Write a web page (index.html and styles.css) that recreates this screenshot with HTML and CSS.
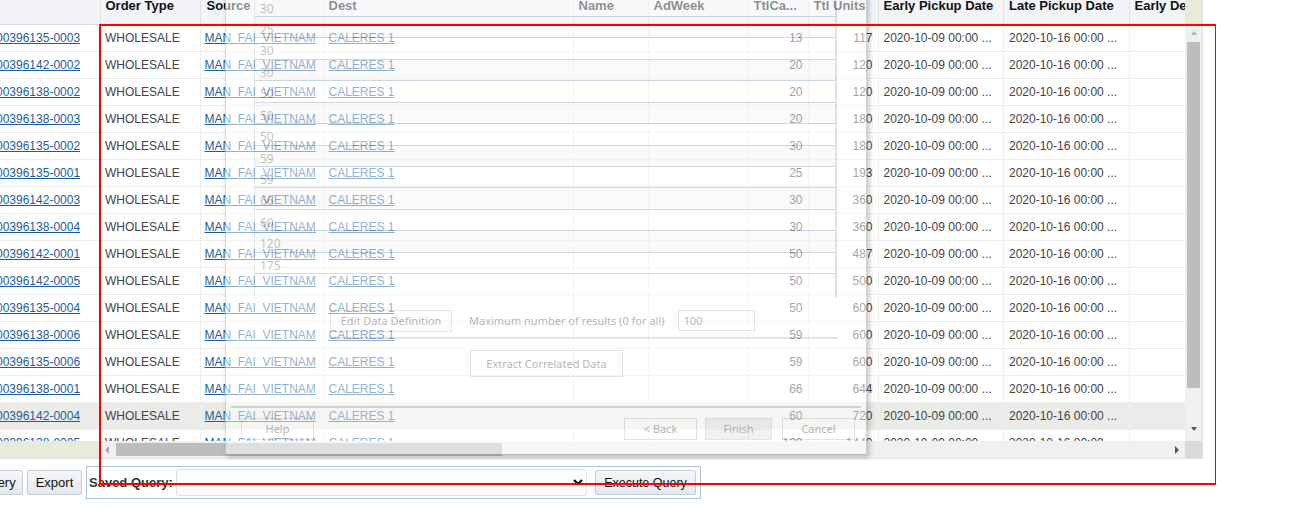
FILE: index.html
```html
<!DOCTYPE html>
<html lang="en">
<head>
  <meta charset="UTF-8" />
  <title>Order Query</title>
  <link rel="stylesheet" href="styles.css">
</head>
<body>
  <div class="panel">
    <div class="panel-top">
      <div class="table-wrap">
        <table class="orders">
          <colgroup>
            <col class="c-id"><col class="c-type"><col class="c-source"><col class="c-dest"><col class="c-name"><col class="c-week"><col class="c-cartons"><col class="c-units"><col class="c-date"><col class="c-date"><col class="c-rest">
          </colgroup>
          <thead>
            <tr><th></th><th>Order Type</th><th class="source-head">Source</th><th>Dest</th><th>Name</th><th>AdWeek</th><th>TtlCa...</th><th>Ttl Units</th><th>Early Pickup Date</th><th>Late Pickup Date</th><th>Early Delivery Date</th></tr>
          </thead>
          <tbody id="orderRows"></tbody>
        </table>
      </div>
      <div class="vscroll">
        <div class="corner-beige"></div>
        <div class="vtrack">
          <span class="arrow up"></span>
          <div class="vthumb"></div>
          <span class="arrow down"></span>
        </div>
      </div>
    </div>
    <div class="hscroll">
      <div class="hscroll-blank"></div>
      <div class="htrack">
        <span class="arrow left"></span>
        <div class="hthumb"></div>
        <span class="arrow right"></span>
      </div>
      <div class="corner-grey"></div>
    </div>
  </div>

  <div class="toolbar">
    <button class="tool-btn query-btn">Query</button>
    <button class="tool-btn export-btn">Export</button>
    <div class="saved-box">
      <label class="saved-label" for="savedQuery">Saved Query:</label>
      <select class="saved-select" id="savedQuery"><option></option></select>
      <button class="tool-btn execute-btn">Execute Query</button>
    </div>
  </div>

  <!-- wizard dialog fading out over the grid -->
  <div class="dialog">
    <div class="inner-box">
      <div class="inner-row">30</div>
      <div class="inner-row alt">25</div>
      <div class="inner-row">30</div>
      <div class="inner-row alt">30</div>
      <div class="inner-row">50</div>
      <div class="inner-row alt">50</div>
      <div class="inner-row">50</div>
      <div class="inner-row alt">59</div>
      <div class="inner-row">59</div>
      <div class="inner-row alt">66</div>
      <div class="inner-row">60</div>
      <div class="inner-row alt">120</div>
      <div class="inner-row">175</div>
    </div>
    <div class="def-row">
      <button class="dlg-btn edit-btn">Edit Data Definition</button>
      <span class="max-label">Maximum number of results (0 for all)</span>
      <input class="max-input" type="text" value="100" />
    </div>
    <div class="extract-row">
      <button class="dlg-btn extract-btn">Extract Correlated Data</button>
    </div>
    <div class="dlg-footer">
      <button class="dlg-btn foot-btn">Help</button>
      <span class="footer-gap"></span>
      <button class="dlg-btn foot-btn">&lt; Back</button>
      <button class="dlg-btn finish-btn">Finish</button>
      <button class="dlg-btn foot-btn">Cancel</button>
    </div>
  </div>

  <div class="red-mark"></div>

  <script>
    var rows = [
      ['00396135-0003', 13, 117], ['00396142-0002', 20, 120], ['00396138-0002', 20, 120],
      ['00396138-0003', 20, 180], ['00396135-0002', 30, 180], ['00396135-0001', 25, 193],
      ['00396142-0003', 30, 360], ['00396138-0004', 30, 360], ['00396142-0001', 50, 487],
      ['00396142-0005', 50, 500], ['00396135-0004', 50, 600], ['00396138-0006', 59, 600],
      ['00396135-0006', 59, 600], ['00396138-0001', 66, 644], ['00396142-0004', 60, 720],
      ['00396138-0005', 120, 1440]
    ];
    var html = '';
    rows.forEach(function (r, i) {
      html += '<tr' + (i === 14 ? ' class="picked"' : '') + '>' +
        '<td class="id-cell"><a href="#">' + r[0] + '</a></td>' +
        '<td class="type-cell">WHOLESALE</td>' +
        '<td class="source-cell"><a href="#">MAN  FAI  VIETNAM</a></td>' +
        '<td><a href="#">CALERES 1</a></td>' +
        '<td></td><td></td>' +
        '<td class="num">' + r[1] + '</td>' +
        '<td class="num">' + r[2] + '</td>' +
        '<td>2020-10-09 00:00 ...</td>' +
        '<td>2020-10-16 00:00 ...</td>' +
        '<td></td></tr>';
    });
    document.getElementById('orderRows').innerHTML = html;
  </script>
</body>
</html>
```

FILE: styles.css
```css
html, body {
  margin: 0;
  padding: 0;
  height: 509px;
  overflow: hidden;
  background: #fff;
  font-family: "Liberation Sans", Arial, sans-serif;
  font-size: 12px;
  color: #444;
}

.panel {
  width: 1202px;
  height: 458px;
  border-right: 1px solid #dbe0e6;
  border-bottom: 1px solid #dbe0e6;
  display: flex;
  flex-direction: column;
}

.panel-top {
  display: flex;
  height: 441px;
}

.table-wrap {
  width: 1185px;
  overflow: hidden;
}

.orders {
  border-collapse: collapse;
  table-layout: fixed;
  width: 1195px;
  margin-left: -10px;
}

.c-id { width: 110px; }
.c-type { width: 100px; }
.c-source { width: 123px; }
.c-dest { width: 250px; }
.c-name { width: 75px; }
.c-week { width: 100px; }
.c-cartons { width: 60px; }
.c-units { width: 70px; }
.c-date { width: 125.5px; }
.c-rest { width: 56px; }

.orders th {
  height: 24px;
  padding: 0 0 0 5px;
  box-sizing: border-box;
  background: #f2f4f8;
  border-right: 1px solid #dfe2e8;
  border-bottom: 1px solid #d9dde3;
  color: #111;
  font-size: 13px;
  line-height: 11px;
  font-weight: bold;
  text-align: left;
  vertical-align: top;
  white-space: nowrap;
  overflow: hidden;
}

.orders th.source-head {
  padding-left: 6px;
}

.orders td {
  height: 27px;
  padding: 0 5px;
  box-sizing: border-box;
  border-right: 1px solid #eee;
  border-bottom: 1px solid #eee;
  white-space: nowrap;
  overflow: hidden;
  color: #444;
}

.orders td.id-cell {
  padding-left: 6px;
}

.orders td.type-cell {
  padding-left: 4.5px;
}

.orders td.source-cell {
  padding-left: 4px;
  white-space: pre;
}

.orders td.num {
  text-align: right;
  color: #444;
}

.orders tr.picked td {
  background: #ebebe9;
}

.orders a {
  color: #1a5e9f;
  text-decoration: underline;
}

/* scrollbars */
.vscroll {
  width: 17px;
  display: flex;
  flex-direction: column;
}

.corner-beige {
  height: 24px;
  background: #eaead8;
}

.vtrack {
  flex: 1;
  background: #f0f0f0;
  display: flex;
  flex-direction: column;
  align-items: center;
  padding-top: 7px;
  box-sizing: border-box;
}

.vthumb {
  width: 13px;
  height: 346px;
  margin-top: 7px;
  background: #bdbdbd;
}

.arrow {
  display: block;
  width: 0;
  height: 0;
  border-style: solid;
  border-color: transparent;
}

.arrow.up {
  border-width: 0 3.5px 4px;
  border-bottom-color: #b0b0b0;
}

.arrow.down {
  border-width: 4px 3.5px 0;
  border-top-color: #555;
  margin-top: 39px;
}

.arrow.left {
  border-width: 4px 4px 4px 0;
  border-right-color: #aaa;
  margin: 0 7px 0 6px;
}

.arrow.right {
  border-width: 4px 0 4px 4px;
  border-left-color: #555;
  margin-left: auto;
  margin-right: 6px;
}

.hscroll {
  display: flex;
  height: 17px;
}

.hscroll-blank {
  width: 99px;
  background: #eaead8;
}

.htrack {
  flex: 1;
  background: #f0f0f0;
  display: flex;
  align-items: center;
}

.hthumb {
  width: 386px;
  height: 13px;
  background: #bdbdbd;
}

.corner-grey {
  width: 17px;
  background: #dadada;
}

/* bottom toolbar */
.toolbar {
  display: flex;
  align-items: center;
  margin-top: 7px;
  margin-left: -27px;
  gap: 4px;
}

.tool-btn {
  height: 25px;
  padding: 0;
  border: 1px solid #c5ced6;
  border-radius: 2px;
  background: linear-gradient(#f5f7f9, #e4e8ec);
  color: #111;
  font-family: "Liberation Sans", Arial, sans-serif;
  font-size: 12.5px;
}

.query-btn { width: 50px; font-size: 13px; }
.export-btn { width: 55px; font-size: 13px; }
.execute-btn { width: 101px; margin-left: 8px; }

.saved-box {
  display: flex;
  align-items: center;
  width: 611px;
  height: 31px;
  margin-left: 0;
  padding-left: 2px;
  box-sizing: content-box;
  border: 1px solid #a9c3dd;
}

.saved-label {
  width: 87px;
  font-size: 13px;
  font-weight: bold;
  color: #333;
}

.saved-select {
  width: 411px;
  height: 27px;
  border: 1px solid #dde3ea;
  border-radius: 2px;
  background: #fbfcfe;
}

/* the fading dialog */
.dialog {
  position: absolute;
  left: 225px;
  top: -20px;
  width: 642px;
  height: 475px;
  box-sizing: border-box;
  background: #fff;
  opacity: 0.52;
  border-left: 1px solid #bbb;
  border-bottom: 1px solid #888;
  border-right: 1px solid #aaa;
  box-shadow: 2px 2px 5px rgba(0, 0, 0, 0.45);
  font-family: "Noto Sans", sans-serif;
  font-size: 11px;
  color: #777;
  display: flex;
  flex-direction: column;
}

.inner-box {
  margin: 15.6px 0 0 28px;
  width: 583px;
  height: 301px;
  box-sizing: border-box;
  border-left: 1px solid #cfd8e4;
  border-right: 2px solid #b9c8da;
}

.inner-row {
  height: 21.43px;
  box-sizing: border-box;
  border-bottom: 1.5px solid #9db5d0;
  padding-left: 5px;
  line-height: 25px;
  color: #9c8a72;
  font-size: 12px;
}

.inner-row.alt {
  background: #f6f6f6;
}

.def-row {
  display: flex;
  align-items: flex-start;
  margin: 13px 0 0 104px;
  height: 27px;
  width: 508px;
  border-bottom: 2px solid #ccc;
}

.dlg-btn {
  border: 1px solid #ccc;
  background: #fff;
  color: #777;
  padding: 0;
  font-family: "Noto Sans", sans-serif;
  font-size: 11px;
}

.edit-btn {
  width: 122px;
  height: 22px;
}

.max-label {
  margin-left: 17px;
  line-height: 22px;
}

.max-input {
  width: 77px;
  height: 21px;
  margin-left: 13px;
  padding: 0 0 0 5px;
  box-sizing: border-box;
  border: 1px solid #ccc;
  font-family: "Noto Sans", sans-serif;
  font-size: 11px;
  color: #777;
}

.extract-row {
  margin: 11px 0 0 244px;
}

.extract-btn {
  width: 153px;
  height: 27px;
}

.dlg-footer {
  display: flex;
  margin: 29px 5px 0;
  padding: 10px 6px 0 10px;
  border-top: 2px solid #bbb;
}

.foot-btn {
  width: 73px;
  height: 22px;
}

.finish-btn {
  width: 67px;
  height: 22px;
  margin: 0 10px 0 8px;
  background: #e6e6e6;
}

.footer-gap {
  flex: 1;
}

.red-mark {
  position: absolute;
  left: 99px;
  top: 24px;
  width: 1117px;
  height: 461px;
  box-sizing: border-box;
  border: 2px solid #f00;
  border-right-width: 1.5px;
}
```
